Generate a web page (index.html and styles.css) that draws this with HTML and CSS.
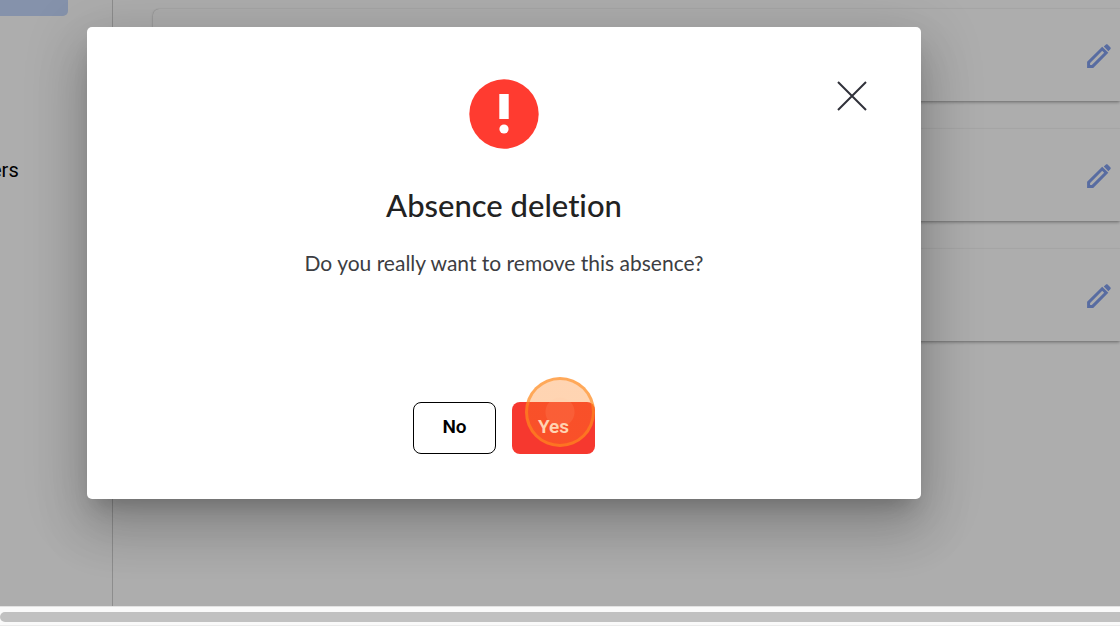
FILE: index.html
```
<!DOCTYPE html>
<html lang="en">
<head>
<meta charset="utf-8">
<meta name="viewport" content="width=device-width, initial-scale=1">
<title>Absence deletion</title>
<link rel="stylesheet" href="styles.css">
</head>
<body>
<div class="app">
  <div class="workspace">
    <nav class="sidebar">
      <div class="nav-active"></div>
      <a class="nav-link" href="#">ers</a>
    </nav>
    <main class="absences">
      <article class="card">
        <button class="edit" type="button" aria-label="Edit">
          <svg viewBox="0 0 26 26"><path class="edit-body" d="M2.600 23.400v-4L16.200 5.800l4 4L6.600 23.400z"/><path class="edit-end" d="M17.800 3.600l1.900-1.900c.6-.6 1.500-.6 2.100 0l2.500 2.500c.6.6.6 1.500 0 2.100l-1.900 1.900z"/></svg>
        </button>
      </article>
      <article class="card">
        <button class="edit" type="button" aria-label="Edit">
          <svg viewBox="0 0 26 26"><path class="edit-body" d="M2.600 23.400v-4L16.200 5.800l4 4L6.600 23.400z"/><path class="edit-end" d="M17.800 3.600l1.900-1.900c.6-.6 1.500-.6 2.100 0l2.500 2.500c.6.6.6 1.500 0 2.100l-1.900 1.900z"/></svg>
        </button>
      </article>
      <article class="card">
        <button class="edit" type="button" aria-label="Edit">
          <svg viewBox="0 0 26 26"><path class="edit-body" d="M2.600 23.400v-4L16.200 5.800l4 4L6.600 23.400z"/><path class="edit-end" d="M17.800 3.600l1.900-1.900c.6-.6 1.500-.6 2.100 0l2.500 2.500c.6.6.6 1.500 0 2.100l-1.900 1.900z"/></svg>
        </button>
      </article>
    </main>
    <div class="overlay">
      <section class="dialog" role="dialog" aria-modal="true" aria-labelledby="dialog-title">
        <button class="close" type="button" aria-label="Close">
          <svg viewBox="0 0 30 30"><path d="M1 1l28 28M29 1L1 29"/></svg>
        </button>
        <svg class="alert" viewBox="0 0 70 70" aria-hidden="true">
          <circle cx="35" cy="35" r="34.700" fill="#ff3b30"/>
          <rect x="30.300" y="15" width="9.400" height="25" fill="#fff"/>
          <circle cx="35" cy="50" r="4.600" fill="#fff"/>
        </svg>
        <h1 class="title" id="dialog-title">Absence deletion</h1>
        <p class="message">Do you really want to remove this absence?</p>
        <div class="actions">
          <button class="button button-no" type="button">No</button>
          <div class="confirm">
            <button class="button button-yes" type="button">Yes</button>
            <span class="click-marker"></span>
          </div>
        </div>
      </section>
    </div>
  </div>
  <div class="scrollbar"><div class="thumb"></div></div>
</div>
</body>
</html>
```
FILE: styles.css
```
* {
  box-sizing: border-box;
}

body {
  margin: 0;
  background: #fff;
  font-family: Lato, "Open Sans", sans-serif;
  font-variant-ligatures: none;
}

button {
  margin: 0;
  padding: 0;
  border: 0;
  background: none;
  cursor: pointer;
}

svg {
  display: block;
}

.app {
  display: flex;
  flex-direction: column;
  height: 100vh;
  overflow: hidden;
}

.workspace {
  position: relative;
  display: flex;
  flex: 1;
  min-height: 0;
  overflow: hidden;
}

.sidebar {
  flex: none;
  width: 113px;
  border-right: 1px solid #d0d0d0;
  overflow: hidden;
}

.nav-active {
  width: 68px;
  height: 16px;
  border-radius: 0 0 5px 0;
  background: #c5d7fd;
}

.nav-link {
  display: block;
  margin: 142px 0 0 -9px;
  color: #000;
  font-family: Roboto, sans-serif;
  font-size: 20px;
  line-height: 24px;
  text-decoration: none;
}

.absences {
  display: flex;
  flex: 1;
  flex-direction: column;
  gap: 28px;
  padding: 9px 0 0 40px;
}

.card {
  display: flex;
  align-items: center;
  justify-content: flex-end;
  height: 92px;
  padding: 2px 8px 0 0;
  border-radius: 6px 0 0 6px;
  background: #fff;
  box-shadow: 0 3px 3px -1px rgba(0, 0, 0, 0.18), 0 1px 3px rgba(0, 0, 0, 0.14), 0 0 1px rgba(0, 0, 0, 0.3);
}

.edit svg {
  width: 26px;
  height: 26px;
}

.edit-body {
  fill: none;
  stroke: #829fee;
  stroke-width: 3;
}

.edit-end {
  fill: #829fee;
}

.overlay {
  position: absolute;
  inset: 0;
  padding: 27px 199px 0 87px;
  background: rgba(0, 0, 0, 0.32);
}

.dialog {
  position: relative;
  display: flex;
  flex-direction: column;
  align-items: center;
  padding: 52px 40px 45px;
  border-radius: 5px;
  background: #fff;
  box-shadow: 0 14px 20px -9px rgba(0, 0, 0, 0.2), 0 31px 50px 4px rgba(0, 0, 0, 0.14), 0 12px 60px 10px rgba(0, 0, 0, 0.12);
}

.close {
  position: absolute;
  top: 54px;
  right: 54px;
}

.close svg {
  width: 30px;
  height: 30px;
  fill: none;
  stroke: #30313a;
  stroke-width: 2;
}

.alert {
  width: 70px;
  height: 70px;
}

.title {
  margin: 36px 0 0;
  color: #222;
  font-size: 31px;
  font-weight: 500;
  line-height: 40px;
}

.message {
  margin: 24px 0 0;
  color: #3c3d42;
  font-size: 21px;
  line-height: 28px;
}

.actions {
  display: flex;
  gap: 16px;
  margin-top: 125px;
}

.confirm {
  position: relative;
}

.button {
  width: 83px;
  height: 52px;
  padding-bottom: 2px;
  border-radius: 8px;
  font-family: Roboto, sans-serif;
  font-size: 19px;
  font-weight: 600;
  line-height: 24px;
}

.button-no {
  border: 1px solid #000;
  background: #fff;
  color: #000;
}

.button-yes {
  display: block;
  background: #f6382f;
  color: #fff;
}

.click-marker {
  position: absolute;
  top: -25px;
  left: 13px;
  width: 70px;
  height: 70px;
  border: 3px solid rgba(255, 140, 30, 0.6);
  border-radius: 50%;
  background: radial-gradient(circle, rgba(255, 148, 66, 0.42) 14px, rgba(255, 130, 30, 0.34) 15px);
  pointer-events: none;
}

.scrollbar {
  flex: none;
  height: 20px;
  padding: 5px 0 3px;
  border-top: 1px solid #e2e2e2;
  border-bottom: 1px solid #ebebeb;
  background: #fafafa;
}

.thumb {
  height: 10px;
  border-radius: 5px 0 0 5px;
  background: #c1c1c1;
}
```
